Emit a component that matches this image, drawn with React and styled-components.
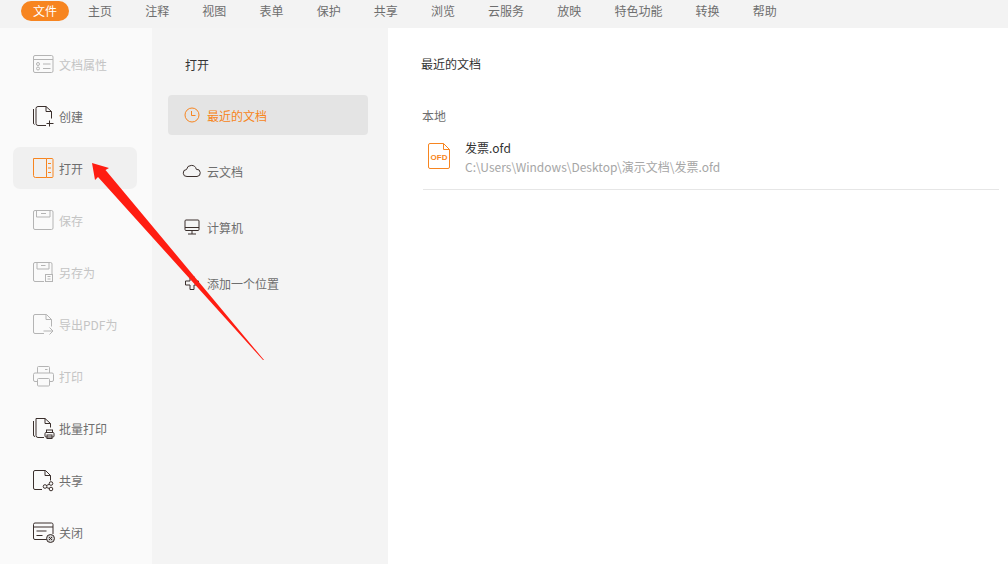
import React from 'react';
import styled, { createGlobalStyle } from 'styled-components';

const GlobalStyle = createGlobalStyle`
  html, body {
    margin: 0;
    padding: 0;
    background: #ffffff;
    overflow: hidden;
  }
  * {
    box-sizing: border-box;
  }
`;

const Page = styled.div`
  position: relative;
  width: 1008px;
  height: 564px;
  display: flex;
  flex-direction: column;
  overflow: hidden;
  font-family: "Noto Sans CJK SC", "Liberation Sans", sans-serif;
  font-size: 12px;
  color: #6e6e6e;
`;

const MenuBar = styled.nav`
  height: 28px;
  flex: none;
  display: flex;
  align-items: flex-start;
  padding-left: 21px;
  background: #f3f3f3;
`;

const MenuTab = styled.div`
  height: 20px;
  margin-top: 1px;
  line-height: 20px;
  white-space: nowrap;
  padding: ${p => (p.$active ? '0 12px' : '0')};
  margin-right: ${p => (p.$active ? '19px' : '33.15px')};
  border-radius: 10px;
  background: ${p => (p.$active ? '#f78520' : 'transparent')};
  color: ${p => (p.$active ? '#ffffff' : '#6e6e6e')};
`;

const Body = styled.div`
  flex: 1;
  display: flex;
  min-height: 0;
`;

const ActionColumn = styled.aside`
  width: 152px;
  flex: none;
  padding: 15px 15px 0 13px;
  display: flex;
  flex-direction: column;
  gap: 10px;
  background: #fafafa;
`;

const ActionRow = styled.div`
  height: 42px;
  flex: none;
  display: flex;
  align-items: center;
  gap: 5px;
  padding-left: 20px;
  border-radius: 7px;
  background: ${p => (p.$active ? '#f0f0f0' : 'transparent')};
  color: ${p => (p.$disabled ? '#c4c4c4' : '#6e6e6e')};
  white-space: nowrap;

  svg {
    flex: none;
    width: 21px;
    height: 22px;
    overflow: visible;
    fill: none;
    stroke: ${p => (p.$active ? '#f78520' : p.$disabled ? '#b4b4b4' : '#3a2f2c')};
    stroke-width: 1;
  }
`;

const PlacesColumn = styled.section`
  width: 236px;
  flex: none;
  padding: 28px 20px 0 16px;
  background: #f4f4f4;
`;

const PlacesTitle = styled.div`
  height: 18px;
  line-height: 18px;
  padding-left: 17px;
  margin-bottom: 21px;
  color: #333333;
`;

const PlacesList = styled.div`
  display: flex;
  flex-direction: column;
  gap: 16px;
`;

const PlaceRow = styled.div`
  height: 40px;
  display: flex;
  align-items: center;
  gap: 7px;
  padding-left: 16px;
  border-radius: 4px;
  background: ${p => (p.$active ? '#e4e4e4' : 'transparent')};
  color: ${p => (p.$active ? '#f78520' : '#6e6e6e')};

  svg {
    flex: none;
    width: 16px;
    height: 16px;
    overflow: visible;
    fill: none;
    stroke: ${p => (p.$active ? '#f78520' : '#3a2f2c')};
    stroke-width: 1;
  }
`;

const Main = styled.main`
  flex: 1;
  padding: 27px 9px 0 33px;
  background: #ffffff;
`;

const MainTitle = styled.div`
  height: 18px;
  line-height: 18px;
  color: #333333;
`;

const GroupLabel = styled.div`
  height: 18px;
  line-height: 18px;
  margin: 34px 0 0 1px;
  color: #6e6e6e;
`;

const FileRow = styled.div`
  display: flex;
  align-items: flex-start;
  gap: 15px;
  height: 65px;
  margin-left: 2px;
  padding: 14px 0 0 5px;
  border-bottom: 1px solid #e6e6e6;

  svg {
    flex: none;
    width: 22px;
    height: 26px;
    margin-top: 4px;
  }
`;

const FileText = styled.div`
  display: flex;
  flex-direction: column;
  gap: 1px;
`;

const FileName = styled.div`
  height: 18px;
  line-height: 18px;
  color: #333333;
`;

const FilePath = styled.div`
  height: 18px;
  line-height: 18px;
  color: #a6a6a6;
`;

const ArrowOverlay = styled.svg`
  position: absolute;
  left: 0;
  top: 0;
  width: 1008px;
  height: 564px;
  pointer-events: none;
`;

const DocInfoIcon = () => (
  <svg viewBox="0 0 21 22">
    <rect x="0.5" y="2.5" width="19.5" height="17" rx="1.5" />
    <path d="M0.5 6.5h19.5M10 11h7.5M10 15.5h7.5" />
    <circle cx="5" cy="11" r="1.5" />
    <circle cx="5" cy="15.5" r="1.5" />
  </svg>
);

const CreateIcon = () => (
  <svg viewBox="0 0 21 22">
    <path d="M5 1.5h8l5.500 5v7M13 1.500v5h5.500M5 1.500a2 2 0 0 0-2 2M.5 4v14a1.500 1.500 0 0 0 1 1.500M3 3.500v15a2 2 0 0 0 2 2h8" />
    <path d="M16.500 15.500v6M13.500 18.500h7" />
  </svg>
);

const OpenIcon = () => (
  <svg viewBox="0 0 21 22">
    <path d="M.5 1.500h13v19H2.500a2 2 0 0 1-2-2z" />
    <path d="M13.500 1.500h5.500a1 1 0 0 1 1 1v17a1 1 0 0 1-1 1h-5.500M15 6.500h3M15 11h3M15 15.500h3" />
  </svg>
);

const SaveIcon = () => (
  <svg viewBox="0 0 21 22">
    <rect x="0.5" y="1.500" width="19.500" height="19" rx="1.500" />
    <path d="M3.500 1.500v6.500h13.500V1.500M8 4.500h5" />
  </svg>
);

const SaveAsIcon = () => (
  <svg viewBox="0 0 21 22">
    <path d="M11 20.500H2a1.500 1.500 0 0 1-1.500-1.500V3A1.500 1.500 0 0 1 2 1.500h15.500A1.500 1.500 0 0 1 19 3v10" />
    <path d="M4 1.500v6.500h12V1.500M8 4.500h4.500" />
    <rect x="12.500" y="13.500" width="7" height="7" />
    <path d="M14.500 15.500h3M14.500 18h3" />
  </svg>
);

const ExportIcon = () => (
  <svg viewBox="0 0 21 22">
    <path d="M11 20.500H2a1.500 1.500 0 0 1-1.500-1.500V3A1.500 1.500 0 0 1 2 1.500h11.500l5 5v7M13 1.500v5h5.500" />
    <path d="M10.500 18h9.500M16.500 14.500l3.500 3.500-3.500 3.500" />
  </svg>
);

const PrintIcon = () => (
  <svg viewBox="0 0 21 22">
    <path d="M4.500 8V2.500a1 1 0 0 1 1-1h10a1 1 0 0 1 1 1V8M4.500 16.500H2A1.500 1.500 0 0 1 .5 15V9.500A1.500 1.500 0 0 1 2 8h17a1.500 1.500 0 0 1 1.500 1.500V15a1.500 1.500 0 0 1-1.500 1.500h-2.500" />
    <rect x="4.500" y="13.500" width="12" height="7.500" rx="1" />
    <path d="M12 4.500h2.500" />
  </svg>
);

const BatchPrintIcon = () => (
  <svg viewBox="0 0 21 22">
    <path d="M3 1.500h9l5.500 5v4M12 1.500v5h5.500M.5 4v14a1.500 1.500 0 0 0 1.500 1.500M3 1.500v17a2 2 0 0 0 2 2h6" />
    <rect x="13.500" y="13" width="6" height="2.500" />
    <rect x="12" y="15.500" width="9" height="4.500" rx="1" />
    <rect x="14" y="18" width="5" height="3.500" />
  </svg>
);

const ShareIcon = () => (
  <svg viewBox="0 0 21 22">
    <path d="M9 20.500H2A1.500 1.500 0 0 1 .5 19V3A1.500 1.500 0 0 1 2 1.500h10.500l5 5v5M12 1.500v5h5.500" />
    <circle cx="12" cy="17.500" r="1.800" />
    <circle cx="18" cy="14.500" r="1.800" />
    <circle cx="18" cy="20" r="1.800" />
    <path d="M13.500 16.500l3-1.300M13.500 18.500l3 1" />
  </svg>
);

const CloseIcon = () => (
  <svg viewBox="0 0 21 22">
    <path d="M14 18.500H2A1.500 1.500 0 0 1 .5 17V3.500A1.500 1.500 0 0 1 2 2h16.500A1.500 1.500 0 0 1 20 3.500V13M.5 6h19.500M3.500 10h10M3.500 14.500h6" />
    <circle cx="17.500" cy="17.500" r="4" fill="#cfcfcf" />
    <path d="M16 16l3 3M19 16l-3 3" />
  </svg>
);

const ClockIcon = () => (
  <svg viewBox="0 0 16 16">
    <circle cx="8" cy="8" r="7" />
    <path d="M7.500 4v4.500h4" />
  </svg>
);

const CloudIcon = () => (
  <svg viewBox="0 0 16 16">
    <path d="M3 13.500a3.500 3.500 0 0 1-.5-7 5 5 0 0 1 9.800-.2 3.600 3.600 0 0 1 .7 7.200z" />
  </svg>
);

const MonitorIcon = () => (
  <svg viewBox="0 0 16 16">
    <rect x="1" y="1" width="14" height="10.500" rx="1" />
    <path d="M1 8.500h14M8 11.500v3.500M4 15h8" />
  </svg>
);

const PlusIcon = () => (
  <svg viewBox="0 0 16 16">
    <path d="M6 1.500h4v4.500h4.500v4H10v4.500H6V10H1.500V6H6z" strokeLinejoin="round" />
  </svg>
);

const OfdIcon = () => (
  <svg viewBox="0 0 22 26">
    <path d="M2 .5h13.500l6 6v17.500a1.500 1.500 0 0 1-1.500 1.500H2A1.500 1.500 0 0 1 .5 24V2A1.500 1.500 0 0 1 2 .5z" fill="none" stroke="#f78520" />
    <path d="M15.500 .5v6h6" fill="none" stroke="#f78520" />
    <text x="11" y="17" textAnchor="middle" fontFamily="Liberation Sans, sans-serif" fontSize="8" fontWeight="700" fill="#f78520">OFD</text>
  </svg>
);

const tabs = ['主页', '注释', '视图', '表单', '保护', '共享', '浏览', '云服务', '放映', '特色功能', '转换', '帮助'];

const actions = [
  { label: '文档属性', Icon: DocInfoIcon, disabled: true },
  { label: '创建', Icon: CreateIcon },
  { label: '打开', Icon: OpenIcon, active: true },
  { label: '保存', Icon: SaveIcon, disabled: true },
  { label: '另存为', Icon: SaveAsIcon, disabled: true },
  { label: '导出PDF为', Icon: ExportIcon, disabled: true },
  { label: '打印', Icon: PrintIcon, disabled: true },
  { label: '批量打印', Icon: BatchPrintIcon },
  { label: '共享', Icon: ShareIcon },
  { label: '关闭', Icon: CloseIcon },
];

const places = [
  { label: '最近的文档', Icon: ClockIcon, active: true },
  { label: '云文档', Icon: CloudIcon },
  { label: '计算机', Icon: MonitorIcon },
  { label: '添加一个位置', Icon: PlusIcon },
];

export default function App() {
  return (
    <Page>
      <GlobalStyle />
      <MenuBar>
        <MenuTab $active>文件</MenuTab>
        {tabs.map(tab => (
          <MenuTab key={tab}>{tab}</MenuTab>
        ))}
      </MenuBar>
      <Body>
        <ActionColumn>
          {actions.map(({ label, Icon, active, disabled }) => (
            <ActionRow key={label} $active={active} $disabled={disabled}>
              <Icon />
              {label}
            </ActionRow>
          ))}
        </ActionColumn>
        <PlacesColumn>
          <PlacesTitle>打开</PlacesTitle>
          <PlacesList>
            {places.map(({ label, Icon, active }) => (
              <PlaceRow key={label} $active={active}>
                <Icon />
                {label}
              </PlaceRow>
            ))}
          </PlacesList>
        </PlacesColumn>
        <Main>
          <MainTitle>最近的文档</MainTitle>
          <GroupLabel>本地</GroupLabel>
          <FileRow>
            <OfdIcon />
            <FileText>
              <FileName>发票.ofd</FileName>
              <FilePath>C:\Users\Windows\Desktop\演示文档\发票.ofd</FilePath>
            </FileText>
          </FileRow>
        </Main>
      </Body>
      <ArrowOverlay viewBox="0 0 1008 564">
        <polygon points="92,163 109,168 105.500,170 264,360 263,360 98,177 95,180" fill="#ff1d12" />
      </ArrowOverlay>
    </Page>
  );
}
